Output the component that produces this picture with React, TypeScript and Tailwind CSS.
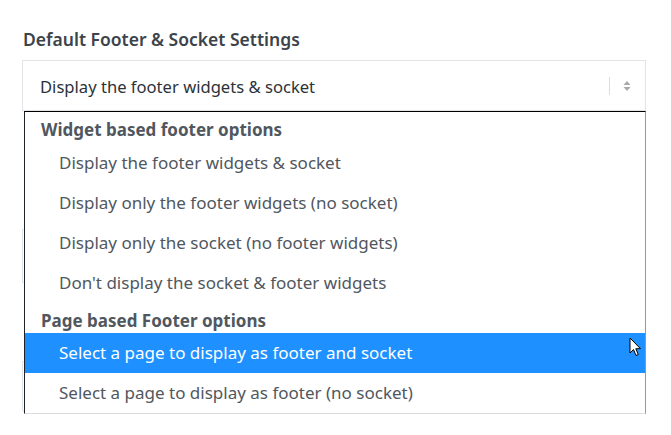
import React from "react";

const options1 = [
  "Display the footer widgets & socket",
  "Display only the footer widgets (no socket)",
  "Display only the socket (no footer widgets)",
  "Don't display the socket & footer widgets",
];

export default function App() {
  return (
    <div
      className="relative w-[671px] h-[435px] bg-white overflow-hidden"
      style={{ fontFamily: '"Noto Sans", "Open Sans", sans-serif' }}
    >
      <div className="pl-[22px] pr-[25px] pt-[28px]">
        <div className="text-[17.5px] leading-[22px] font-semibold text-[#3c434a] pl-[1px]">
          Default Footer &amp; Socket Settings
        </div>
        <div className="mt-[10px] h-[51px] border border-[#e2e4e7] flex items-center pl-[17px] pr-[14px] pt-[4px]">
          <span className="flex-1 text-[16.6px] text-[#2c3338]">
            Display the footer widgets &amp; socket
          </span>
          <span className="w-px h-[18px] bg-[#dcdcde] mr-[13px] -mt-[4px]" />
          <svg width="8" height="12" viewBox="0 0 8 12" className="-mt-[4px]">
            <path d="M4 1 L7.5 5 L0.5 5 Z" fill="#a7aaad" />
            <path d="M4 11 L7.5 7 L0.5 7 Z" fill="#a7aaad" />
          </svg>
        </div>
        <div className="mt-[118px] h-[54px] border border-[#e2e4e7]" />
        <div className="mt-[56px] text-[16px] text-[#8a5a2b] leading-[20px] h-[22px]">&nbsp;</div>
        <div className="mt-[0px] h-[52px] border border-[#e2e4e7] rounded-b-[4px]" />
      </div>

      <div className="absolute left-[24px] top-[111px] w-[622px] h-[303px] bg-white border-t border-l border-t-black border-l-[#1d2327] border-r border-r-[#7b9bd6] border-b border-b-[#dcdcde] text-[17px]">
        <div className="h-[31px] flex items-end pb-[1px] pl-[16px] font-bold text-[#50575e]">
          Widget based footer options
        </div>
        {options1.map((o) => (
          <div key={o} className="h-[40px] flex items-center pl-[34px] text-[#50575e]">
            {o}
          </div>
        ))}
        <div className="h-[30px] flex items-end pl-[16px] font-bold text-[#50575e]">
          Page based Footer options
        </div>
        <div className="h-[40px] flex items-center pl-[34px] bg-[#1e90ff] text-white">
          Select a page to display as footer and socket
        </div>
        <div className="h-[40px] flex items-center pl-[34px] text-[#50575e]">
          Select a page to display as footer (no socket)
        </div>
      </div>

      <svg
        className="absolute left-[629px] top-[337px]"
        width="13"
        height="20"
        viewBox="0 0 13 20"
      >
        <path
          d="M1 1 L1 16 L4.5 12.5 L7 18.5 L9.3 17.5 L6.8 11.7 L11.5 11.7 Z"
          fill="white"
          stroke="black"
          strokeWidth="1"
          strokeLinejoin="round"
        />
      </svg>
    </div>
  );
}
